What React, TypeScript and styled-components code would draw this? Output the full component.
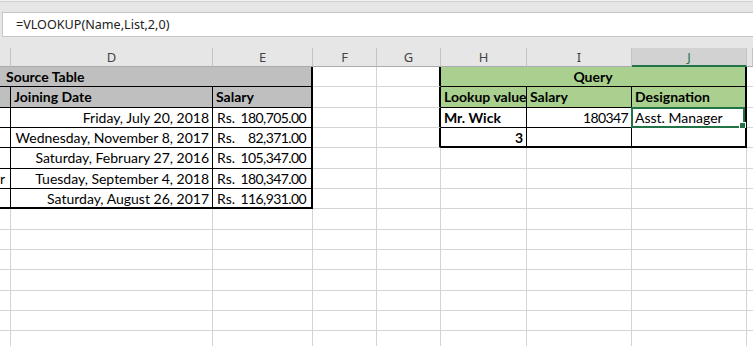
import React from 'react';
import styled, { createGlobalStyle } from 'styled-components';

const GlobalStyle = createGlobalStyle`
  html, body {
    margin: 0;
    padding: 0;
    background: #fff;
  }
  body {
    width: 753px;
    height: 346px;
    overflow: hidden;
  }
`;

const Window = styled.div`
  width: 753px;
  height: 346px;
  display: flex;
  flex-direction: column;
  background: #e6e6e6;
  overflow: hidden;

  & > * {
    flex-shrink: 0;
  }
`;

const RibbonEdge = styled.div`
  height: 12px;
  box-sizing: border-box;
  border-top: 1px solid #f2f2f2;
  box-shadow: inset 0 1px 0 #d0d0d0;
`;

const FormulaBar = styled.div`
  margin-left: 2px;
  height: 25px;
  box-sizing: border-box;
  background: #fff;
  border: 1px solid #c6c6c6;
  border-right: none;
  display: flex;
  align-items: center;
  padding-left: 13px;
  font-family: 'Noto Sans', 'Open Sans', sans-serif;
  font-size: 12.6px;
  color: #222;
`;

const Gap = styled.div`
  height: 11px;
`;

const Sheet = styled.div`
  display: grid;
  grid-template-columns: 11px 202px 100px 64px 64px 86px 105px 115px 6px;
  grid-template-rows: 19px repeat(14, 20.33px);
  background: #fff;
  font-family: Lato, 'Liberation Sans', sans-serif;
  font-size: 14px;
  color: #000;
`;

const ColHead = styled.div<{ $selected?: boolean }>`
  box-sizing: border-box;
  background: ${p => (p.$selected ? '#d2d2d2' : '#e6e6e6')};
  border-right: 1px solid #c3c3c3;
  border-bottom: ${p => (p.$selected ? '2px solid #217346' : '1px solid #ababab')};
  display: flex;
  align-items: center;
  justify-content: center;
  font-family: 'Noto Sans', 'Open Sans', sans-serif;
  font-size: 13px;
  color: ${p => (p.$selected ? '#217346' : '#444')};
`;

type Edge = 'grid' | 'thin' | 'thick' | 'none';

const edge = (e: Edge = 'grid') =>
  e === 'thick'
    ? '2px solid #000'
    : e === 'thin'
    ? '1px solid #000'
    : e === 'none'
    ? '1px solid transparent'
    : '1px solid #d4d4d4';

const Cell = styled.div<{
  $bg?: string;
  $bold?: boolean;
  $align?: 'left' | 'right' | 'center';
  $r?: Edge;
  $b?: Edge;
  $span?: number;
}>`
  position: relative;
  box-sizing: border-box;
  grid-column: span ${p => p.$span ?? 1};
  background: ${p => p.$bg ?? '#fff'};
  border-right: ${p => edge(p.$r)};
  border-bottom: ${p => edge(p.$b)};
  display: flex;
  align-items: center;
  justify-content: ${p =>
    p.$align === 'right' ? 'flex-end' : p.$align === 'center' ? 'center' : 'flex-start'};
  padding: 0 3px;
  font-weight: ${p => (p.$bold ? 700 : 400)};
  white-space: nowrap;
`;

const Money = styled(Cell)`
  justify-content: space-between;
  padding: 0 5px 0 4px;
`;

// Lato digits run wider than Calibri's, so tighten numbers a little
const Num = styled.span`
  letter-spacing: -0.6px;
`;

const Selection = styled.div`
  position: absolute;
  left: -1px;
  right: 0;
  top: -1px;
  bottom: -1px;
  border: 2px solid #217346;
  pointer-events: none;
`;

const Handle = styled.div`
  position: absolute;
  right: -3px;
  bottom: -3px;
  width: 5px;
  height: 5px;
  background: #217346;
  border: 1px solid #fff;
`;

const GRAY = '#bfbfbf';
const GREEN = '#a9d08e';

const columns = ['', 'D', 'E', 'F', 'G', 'H', 'I', 'J', ''];

const source = [
  { date: 'Friday, July 20, 2018', salary: '180,705.00' },
  { date: 'Wednesday, November 8, 2017', salary: '82,371.00' },
  { date: 'Saturday, February 27, 2016', salary: '105,347.00' },
  { date: 'Tuesday, September 4, 2018', salary: '180,347.00', spill: 'r' },
  { date: 'Saturday, August 26, 2017', salary: '116,931.00' },
];

function QueryCells({ row }: { row: number }) {
  if (row === 0)
    return (
      <>
        <Cell $bold $r="thin" $b="thin">Mr. Wick</Cell>
        <Cell $align="right" $r="thin" $b="thin"><Num>180347</Num></Cell>
        <Cell $r="thick" $b="thin">
          Asst. Manager
          <Selection>
            <Handle />
          </Selection>
        </Cell>
      </>
    );
  if (row === 1)
    return (
      <>
        <Cell $bold $align="right" $r="thin" $b="thick">3</Cell>
        <Cell $r="thin" $b="thick" />
        <Cell $r="thick" $b="thick" />
      </>
    );
  return (
    <>
      <Cell />
      <Cell />
      <Cell />
    </>
  );
}

export default function App() {
  return (
    <Window>
      <GlobalStyle />
      <RibbonEdge />
      <FormulaBar>=VLOOKUP(Name,List,2,0)</FormulaBar>
      <Gap />
      <Sheet>
        {columns.map((c, i) => (
          <ColHead key={i} $selected={c === 'J'}>{c}</ColHead>
        ))}

        {/* titles */}
        <Cell $span={3} $bg={GRAY} $bold $r="thick" $b="thin" style={{ paddingLeft: 6 }}>
          Source Table
        </Cell>
        <Cell />
        <Cell $r="thick" />
        <Cell $span={3} $bg={GREEN} $bold $align="center" $r="thick" $b="thin">
          Query
        </Cell>
        <Cell />

        {/* column names */}
        <Cell $bg={GRAY} $r="thin" $b="thin" />
        <Cell $bg={GRAY} $bold $r="thin" $b="thin">Joining Date</Cell>
        <Cell $bg={GRAY} $bold $r="thick" $b="thin">Salary</Cell>
        <Cell />
        <Cell $r="thick" />
        <Cell $bg={GREEN} $bold $r="thin" $b="thin">Lookup value</Cell>
        <Cell $bg={GREEN} $bold $r="thin" $b="thin">Salary</Cell>
        <Cell $bg={GREEN} $bold $r="thick" $b="thin">Designation</Cell>
        <Cell />

        {source.map((s, i) => {
          const last = i === source.length - 1;
          const b: Edge = last ? 'thick' : 'thin';
          return (
            <React.Fragment key={s.date}>
              <Cell $r="thin" $b={b} style={{ padding: 0 }}>{s.spill}</Cell>
              <Cell $align="right" $r="thin" $b={b}>{s.date}</Cell>
              <Money $r="thick" $b={b}>
                <span>Rs.</span>
                <Num>{s.salary}</Num>
              </Money>
              <Cell />
              <Cell $r={i < 2 ? 'thick' : 'grid'} />
              <QueryCells row={i} />
              <Cell />
            </React.Fragment>
          );
        })}

        {Array.from({ length: 7 }).map((_, r) =>
          columns.map((_, c) => <Cell key={`${r}-${c}`} />)
        )}
      </Sheet>
    </Window>
  );
}
